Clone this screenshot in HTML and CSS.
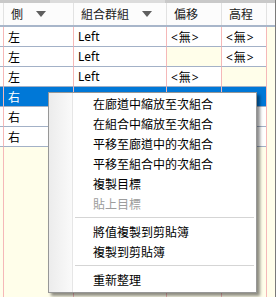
FILE: index.html
```html
<!DOCTYPE html>
<html lang="zh-Hant">
<head>
  <meta charset="UTF-8" />
  <title>Grid menu</title>
  <link rel="stylesheet" href="styles.css">
</head>
<body>
  <div class="grid">
    <div class="topbar"></div>

    <!-- header -->
    <div class="head">
      <div class="hc c0"></div>
      <div class="hc c1">側<span class="arrow"></span></div>
      <div class="hc c2">組合群組<span class="arrow"></span></div>
      <div class="hc c3">偏移</div>
      <div class="hc c4">高程</div>
      <div class="hc c5"></div>
    </div>

    <!-- rows -->
    <div class="row">
      <div class="cell c0"></div>
      <div class="cell c1">左</div>
      <div class="cell c2">Left</div>
      <div class="cell c3 none">&lt;無&gt;</div>
      <div class="cell c4 none">&lt;無&gt;</div>
      <div class="pad c5"></div>
    </div>
    <div class="row">
      <div class="cell c0"></div>
      <div class="cell c1">左</div>
      <div class="cell c2">Left</div>
      <div class="cell c3 empty"></div>
      <div class="cell c4 none">&lt;無&gt;</div>
      <div class="pad c5"></div>
    </div>
    <div class="row">
      <div class="cell c0"></div>
      <div class="cell c1">左</div>
      <div class="cell c2">Left</div>
      <div class="cell c3 none">&lt;無&gt;</div>
      <div class="cell c4 empty"></div>
      <div class="pad c5"></div>
    </div>
    <div class="row selected">
      <div class="cell c0"></div>
      <div class="cell c1">右</div>
      <div class="cell c2"></div>
      <div class="cell c3"></div>
      <div class="cell c4"></div>
      <div class="pad c5"></div>
    </div>
    <div class="row">
      <div class="cell c0"></div>
      <div class="cell c1">右</div>
      <div class="cell c2"></div>
      <div class="cell c3"></div>
      <div class="cell c4"></div>
      <div class="pad c5"></div>
    </div>
    <div class="row">
      <div class="cell c0"></div>
      <div class="cell c1">右</div>
      <div class="cell c2"></div>
      <div class="cell c3"></div>
      <div class="cell c4"></div>
      <div class="pad c5"></div>
    </div>

    <!-- empty area below the rows -->
    <div class="filler">
      <div class="pad c0"></div>
      <div class="pad c1"></div>
      <div class="pad c2"></div>
      <div class="pad c3"></div>
      <div class="pad c4"></div>
      <div class="pad c5"></div>
    </div>

    <!-- context menu -->
    <div class="menu">
      <div class="item">在廊道中縮放至次組合</div>
      <div class="item">在組合中縮放至次組合</div>
      <div class="item">平移至廊道中的次組合</div>
      <div class="item">平移至組合中的次組合</div>
      <div class="item">複製目標</div>
      <div class="item disabled">貼上目標</div>
      <div class="sep"></div>
      <div class="item">將值複製到剪貼簿</div>
      <div class="item">複製到剪貼簿</div>
      <div class="sep"></div>
      <div class="item">重新整理</div>
    </div>
  </div>
</body>
</html>
```

FILE: styles.css
```css
body {
  margin: 0;
  background: #ffffff;
  font-family: "Noto Sans", "Noto Sans CJK TC", sans-serif;
  font-size: 12px;
  color: #000;
}

.grid {
  position: relative;
  width: 275px;
  height: 297px;
  border-right: 1px solid #7a7a7a;
  background: #fffeea;
  display: flex;
  flex-direction: column;
}

.topbar {
  height: 3px;
  background: linear-gradient(to right, #c9c9c9 0, #c9c9c9 50px, #dcdcdc 50px, #dcdcdc 165px, #c9c9c9 165px);
}

/* column widths */
.c0 { width: 3px; }
.c1 { width: 70px; }
.c2 { width: 93px; }
.c3 { width: 55px; }
.c4 { width: 45px; }
.c5 { flex: 1; }

.head {
  display: flex;
  height: 22px;
  background: #fcfcfc;
  border-bottom: 2px solid #a8b6ca;
}

.hc {
  box-sizing: border-box;
  display: flex;
  align-items: center;
  padding-left: 7px;
  border-left: 1px solid #e2e2e2;
  color: #1a1a1a;
}

.hc.c0 {
  border-left: none;
  padding: 0;
}

.arrow {
  width: 0;
  height: 0;
  margin-left: 13px;
  border-left: 5px solid transparent;
  border-right: 5px solid transparent;
  border-top: 6px solid #5f5f5f;
}

.row {
  display: flex;
  height: 20px;
}

.cell {
  box-sizing: border-box;
  display: flex;
  align-items: center;
  padding-left: 4px;
  background: #ffffff;
  border-left: 1px solid #f5b8b8;
  border-bottom: 1px solid #a3b1c7;
}

.cell.c0 {
  border-left: none;
  padding: 0;
}

.cell.none {
  letter-spacing: 1px;
}

.cell.empty {
  background: #fffeea;
}

.pad {
  box-sizing: border-box;
  border-left: 1px solid #f5b8b8;
}

.pad.c0 {
  border-left: none;
}

.selected .cell {
  background: #0078d7;
  color: #ffffff;
}

.filler {
  display: flex;
  flex: 1;
}

/* context menu */
.menu {
  position: absolute;
  left: 48px;
  top: 92px;
  width: 205px;
  padding: 1px 1px 2px;
  border: 1px solid #979797;
  background: linear-gradient(to right, #ececec 0, #fafafa 23px, #e6e6e6 23px, #e6e6e6 24px, #ffffff 24px);
  box-shadow: 3px 3px 3px rgba(0, 0, 0, 0.45);
  font-family: "Noto Sans CJK TC", sans-serif;
}

.item {
  height: 20px;
  line-height: 20px;
  padding-left: 43px;
}

.item.disabled {
  color: #9d9d9d;
}

.sep {
  height: 8px;
  margin-left: 25px;
  margin-right: 1px;
  background: linear-gradient(#d5d5d5, #d5d5d5) 0 3px / 100% 1px no-repeat;
}
```
